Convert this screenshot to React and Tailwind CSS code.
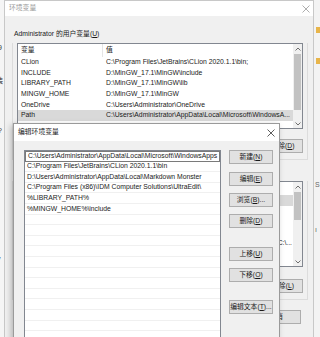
import React from 'react';

const userVars = [
    ['CLion', 'C:\\Program Files\\JetBrains\\CLion 2020.1.1\\bin;'],
    ['INCLUDE', 'D:\\MinGW_17.1\\MinGW\\include'],
    ['LIBRARY_PATH', 'D:\\MinGW_17.1\\MinGW\\lib'],
    ['MINGW_HOME', 'D:\\MinGW_17.1\\MinGW'],
    ['OneDrive', 'C:\\Users\\Administrator\\OneDrive'],
    ['Path', 'C:\\Users\\Administrator\\AppData\\Local\\Microsoft\\WindowsA...'],
    ['TEMP', 'C:\\Users\\Administrator\\AppData\\Local\\Temp'],
];

const systemVars = [
    ['ComSpec', 'C:\\Windows\\system32\\cmd.exe'],
    ['DriverData', 'C:\\Windows\\System32\\Drivers\\DriverData'],
    ['NUMBER_OF_PROCESSORS', '8'],
    ['OS', 'Windows_NT'],
    ['Path', 'C:\\Windows\\system32;C:\\Windows;C:\\Windows\\System32\\Wbem;', 'C:\\...'],
    ['PATHEXT', '.COM;.EXE;.BAT;.CMD;.VBS;.VBE;.JS'],
    ['PROCESSOR_ARCHITECTURE', 'AMD64'],
];

const paths = [
    'C:\\Users\\Administrator\\AppData\\Local\\Microsoft\\WindowsApps',
    'C:\\Program Files\\JetBrains\\CLion 2020.1.1\\bin',
    'D:\\Users\\Administrator\\AppData\\Local\\Markdown Monster',
    'C:\\Program Files (x86)\\IDM Computer Solutions\\UltraEdit\\',
    '%LIBRARY_PATH%',
    '%MINGW_HOME%\\include',
];

const CloseIcon = ({ color = '#333' }) => (
    <svg width="8" height="8" viewBox="0 0 8 8">
        <path d="M0.5 0.5 L7.5 7.5 M7.5 0.5 L0.5 7.5" stroke={color} strokeWidth="0.8" />
    </svg>
);

const Btn = ({ children, className = '' }) => (
    <div className={`h-[14px] border border-[#adadad] bg-[#e1e1e1] flex items-center justify-center text-[6.8px] text-[#1a1a1a] whitespace-nowrap ${className}`}>
        {children}
    </div>
);

const Arrow = ({ up }) => (
    <svg width="6" height="4" viewBox="0 0 6 4">
        <path d={up ? 'M0.5 3.5 L3 1 L5.5 3.5' : 'M0.5 0.5 L3 3 L5.5 0.5'} stroke="#606060" strokeWidth="0.9" fill="none" />
    </svg>
);

const ScrollBar = ({ thumbTop, thumbHeight }) => (
    <div className="w-[9px] h-full bg-[#f0f0f0] flex flex-col items-center relative">
        <div className="h-[9px] flex items-center justify-center"><Arrow up /></div>
        <div className="flex-1 w-full relative">
            <div className="absolute left-[1px] right-[1px] bg-[#c2c2c2]" style={{ top: thumbTop, height: thumbHeight }} />
        </div>
        <div className="h-[9px] flex items-center justify-center"><Arrow /></div>
    </div>
);

const VarList = ({ rows, selected, thumbTop, thumbHeight, className = '' }) => (
    <div className={`border border-[#828790] bg-white flex overflow-hidden ${className}`}>
        <div className="flex-1 flex flex-col overflow-hidden">
            <div className="h-[13px] flex shrink-0 text-[6.8px] text-[#1a1a1a]">
                <div className="w-[85px] pl-[3px] border-r border-[#e5e5e5] flex items-center">变量</div>
                <div className="flex-1 pl-[3px] flex items-center">值</div>
            </div>
            {rows.map(([name, value, tail], i) => (
                <div key={name} className={`h-[10.6px] shrink-0 flex items-center text-[6.8px] text-[#1a1a1a] whitespace-nowrap ${i === selected ? 'bg-[#d9d9d9]' : ''}`}>
                    <div className="w-[85px] pl-[3px] overflow-hidden shrink-0">{name}</div>
                    {tail ? (
                        <div className="flex-1 min-w-0 pl-[3px] pr-[1px] flex">
                            <span className="flex-1 min-w-0 overflow-hidden">{value}</span>
                            <span className="shrink-0">{tail}</span>
                        </div>
                    ) : (
                        <div className="flex-1 min-w-0 pl-[3px] overflow-hidden">{value}</div>
                    )}
                </div>
            ))}
        </div>
        <ScrollBar thumbTop={thumbTop} thumbHeight={thumbHeight} />
    </div>
);

export default function App() {
    return (
        <div className="relative w-[320px] h-[337px] overflow-hidden bg-[#f0f0f0] font-['Liberation_Sans','Noto_Sans_CJK_SC',sans-serif]">
            {/* window peeking at the left edge */}
            <div className="absolute left-0 top-0 w-[5px] h-full bg-[#f5f5f5] overflow-hidden text-[7px] text-[#333]">
                <div className="absolute top-[43px] left-[-2px]">9</div>
                <div className="absolute top-[76px] left-[-4px]">装</div>
                <div className="absolute top-[126px] left-[-2px]">?</div>
                <div className="absolute top-[174px] left-[-2px]">t</div>
                <div className="absolute top-[254px] left-[-3px]">y</div>
            </div>

            {/* window peeking at the right edge */}
            <div className="absolute left-[314px] top-0 w-[6px] h-full bg-[#f3f3f3] overflow-hidden">
                <div className="absolute left-[2px] top-[27px] w-[6px] h-[6px] bg-[#e8b54a]" />
                <div className="absolute left-[2px] top-[58px] w-[6px] h-[6px] bg-[#e8b54a]" />
                <div className="absolute left-[1px] top-[180px] text-[7px] text-[#666]">S</div>
                <div className="absolute left-[1px] top-[225px] text-[7px] text-[#666]">ı</div>
            </div>

            {/* 环境变量 window */}
            <div className="absolute left-[4px] top-0 w-[310px] h-[345px] bg-[#f0f0f0] border border-[#c8c8c8] flex flex-col">
                <div className="h-[15px] bg-white flex items-center justify-between pl-[4px] pr-[3px] shrink-0">
                    <span className="text-[6.8px] text-[#999]">环境变量</span>
                    <CloseIcon color="#999" />
                </div>
                <div className="flex flex-col px-[7px] pt-[12px]">
                    <div className="text-[6.8px] text-[#1a1a1a] h-[12px] pl-[2px] flex items-center">Administrator 的用户变量(<span className="underline">U</span>)</div>
                    <div className="mt-[3px] border border-[#dcdcdc] border-t-0 px-[4px] pb-[6px] mr-[-2px]">
                        <VarList rows={userVars} selected={5} thumbTop={1} thumbHeight={56} className="h-[86px]" />
                        <div className="flex justify-end gap-[8px] mt-[10px]">
                            <Btn className="w-[42px]">新建(N)...</Btn>
                            <Btn className="w-[42px]">编辑(E)...</Btn>
                            <Btn className="w-[40px]">删除(<span className="underline">D</span>)</Btn>
                        </div>
                    </div>
                    <div className="text-[6.8px] text-[#1a1a1a] h-[12px] pl-[2px] flex items-center mt-[6px]">系统变量(S)</div>
                    <div className="mt-[3px] border border-[#dcdcdc] border-t-0 px-[4px] pb-[6px] mr-[-2px]">
                        <VarList rows={systemVars} selected={0} thumbTop={1} thumbHeight={28} className="h-[86px]" />
                        <div className="flex justify-end gap-[8px] mt-[12px]">
                            <Btn className="w-[42px]">新建(W)...</Btn>
                            <Btn className="w-[42px]">编辑(I)...</Btn>
                            <Btn className="w-[40px]">删除(<span className="underline">L</span>)</Btn>
                        </div>
                    </div>
                    <div className="flex justify-end gap-[8px] mt-[10px] pr-[5px]">
                        <Btn className="w-[50px]">确定</Btn>
                        <Btn className="w-[50px]">取消</Btn>
                    </div>
                </div>
            </div>

            {/* 编辑环境变量 dialog */}
            <div className="absolute left-[13px] top-[123px] w-[267px] h-[230px] bg-[#f0f0f0] border border-[#9a9a9a] shadow-[-2px_2px_6px_rgba(0,0,0,0.25)] flex flex-col">
                <div className="h-[17px] bg-white flex items-center justify-between pl-[4px] pr-[4px] shrink-0">
                    <span className="text-[6.8px] text-[#1a1a1a]">编辑环境变量</span>
                    <CloseIcon />
                </div>
                <div className="flex pt-[9px] pl-[10px] gap-[8px] flex-1">
                    <div className="w-[197px] h-full bg-white border border-[#828790] flex flex-col">
                        {paths.concat(Array(12).fill('')).map((p, i) => (
                            <div key={i} className={`h-[10.6px] shrink-0 flex items-center pl-[2px] text-[6.8px] text-[#1a1a1a] whitespace-nowrap overflow-hidden ${i === 0 ? 'border border-[#7a7a7a]' : 'border-b border-[#f0f0f0]'}`}>
                                {p}
                            </div>
                        ))}
                    </div>
                    <div className="w-[44px] flex flex-col">
                        <Btn>新建(<span className="underline">N</span>)</Btn>
                        <Btn className="mt-[8px]">编辑(<span className="underline">E</span>)</Btn>
                        <Btn className="mt-[7px]">浏览(<span className="underline">B</span>)...</Btn>
                        <Btn className="mt-[7px]">删除(<span className="underline">D</span>)</Btn>
                        <Btn className="mt-[19px]">上移(<span className="underline">U</span>)</Btn>
                        <Btn className="mt-[7px]">下移(<span className="underline">O</span>)</Btn>
                        <Btn className="mt-[18px]">编辑文本(<span className="underline">T</span>)...</Btn>
                    </div>
                </div>
            </div>
        </div>
    );
}
